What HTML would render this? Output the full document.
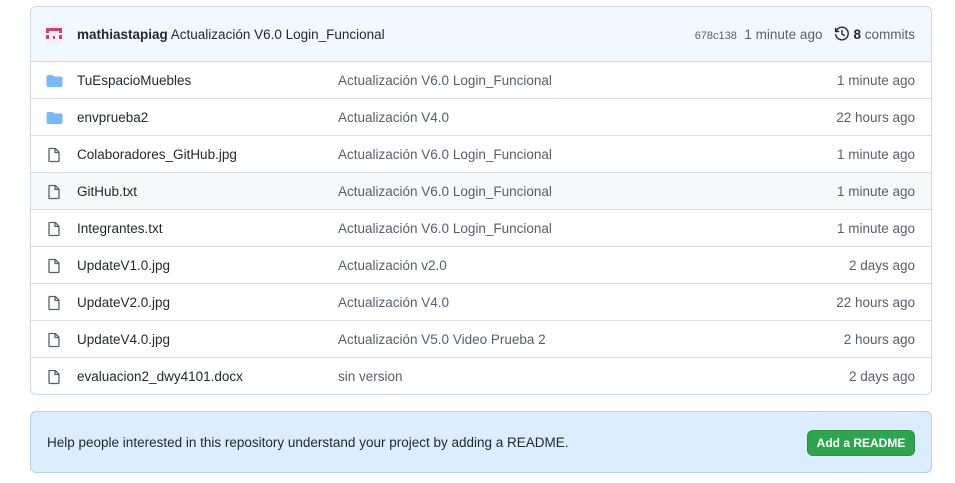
<!DOCTYPE html>
<html><head><meta charset="utf-8"><style>
body{margin:0;background:#fff;font-family:"Liberation Sans",sans-serif;font-size:13.5px;color:#24292f}
.box{position:absolute;left:30px;top:6px;width:900px;border:1px solid #d0d7de;border-radius:6px;overflow:hidden}
.hd{height:54px;background:#f1f8ff;border-bottom:1px solid #d0d7de;position:relative}
.row{height:36px;border-top:1px solid #d8dee4;position:relative}
.row.hl{background:#f6f8fa}
.ab{position:absolute;top:0;line-height:37px;white-space:nowrap}
.ic{position:absolute;left:15px;top:11px}
.nm{left:46px}.msg{left:307px;color:#57606a}.tm{right:16px;color:#57606a}
.rd{position:absolute;left:30px;top:411px;width:900px;height:60px;border:1px solid #b6cfe9;border-radius:6px;background:#dbedff}
.btn{position:absolute;left:776px;top:18px;width:108px;height:26px;background:#2da44e;border:1px solid #288f44;border-radius:6px;color:#fff;font-weight:bold;font-size:12px;line-height:25px;text-align:center;box-sizing:border-box}
</style></head><body>
<div class="box">
<div class="hd">
<svg style="position:absolute;left:12px;top:16px" width="22" height="22" viewBox="0 0 22 22"><circle cx="11" cy="11" r="11" fill="#f0f0f0"/><rect x="3" y="5" width="16" height="3" fill="#c8457a"/><rect x="3" y="8" width="3" height="2" fill="#c8457a"/><rect x="16" y="8" width="3" height="2" fill="#c8457a"/><rect x="3" y="12" width="3" height="4" fill="#c8457a"/><rect x="10" y="13" width="2" height="3" fill="#c8457a"/><rect x="16" y="12" width="3" height="4" fill="#c8457a"/></svg>
<div class="ab" style="left:46px;line-height:56px"><b>mathiastapiag</b> Actualización V6.0 Login_Funcional</div>
<div class="ab" style="right:16px;line-height:56px;color:#57606a"><span style="font-size:11px">678c138</span>&nbsp; 1 minute ago &nbsp;&nbsp;<svg width="16" height="16" viewBox="0 0 16 16" style="vertical-align:-3px"><path d="M1.6 2.5v3h3M2 5.3A6.3 6.3 0 1 1 1.7 8.6" fill="none" stroke="#24292f" stroke-width="1.4" stroke-linecap="round"/><path d="M8 4.5V8l2.3 1.5" fill="none" stroke="#24292f" stroke-width="1.4" stroke-linecap="round"/></svg> <b style="color:#24292f">8</b> commits</div>
</div>
<div id="rows"></div>
</div>
<div class="rd"><div class="ab" style="left:16px;line-height:62px">Help people interested in this repository understand your project by adding a README.</div><div class="btn">Add a README</div></div>
<script>
var F='<svg class="ic" width="17" height="16" viewBox="0 0 16 16"><path d="M1.75 2A1.75 1.75 0 0 0 0 3.75v8.5C0 13.22.78 14 1.75 14h12.5c.97 0 1.75-.78 1.75-1.75v-7c0-.97-.78-1.75-1.75-1.75H7.5l-1-1.2A1.75 1.75 0 0 0 5.2 2z" fill="#79b8ff"/></svg>';
var D='<svg class="ic" width="16" height="16" viewBox="0 0 16 16"><path d="M3.75 1.5h5.5L13 5.25v8.5a.75.75 0 0 1-.75.75h-8.5A.75.75 0 0 1 3 13.75V2.25a.75.75 0 0 1 .75-.75zM9 1.5v4h4" fill="none" stroke="#57606a" stroke-width="1.3" stroke-linejoin="round"/></svg>';
var r=[[F,'TuEspacioMuebles','Actualización V6.0 Login_Funcional','1 minute ago'],[F,'envprueba2','Actualización V4.0','22 hours ago'],[D,'Colaboradores_GitHub.jpg','Actualización V6.0 Login_Funcional','1 minute ago'],[D,'GitHub.txt','Actualización V6.0 Login_Funcional','1 minute ago'],[D,'Integrantes.txt','Actualización V6.0 Login_Funcional','1 minute ago'],[D,'UpdateV1.0.jpg','Actualización v2.0','2 days ago'],[D,'UpdateV2.0.jpg','Actualización V4.0','22 hours ago'],[D,'UpdateV4.0.jpg','Actualización V5.0 Video Prueba 2','2 hours ago'],[D,'evaluacion2_dwy4101.docx','sin version','2 days ago']];
var h='';r.forEach(function(x,i){h+='<div class="row'+(i==3?' hl':'')+'"'+(i==0?' style="border-top:none"':'')+'>'+x[0]+'<div class="ab nm">'+x[1]+'</div><div class="ab msg">'+x[2]+'</div><div class="ab tm">'+x[3]+'</div></div>';});
document.getElementById('rows').innerHTML=h;
</script>
</body></html>
